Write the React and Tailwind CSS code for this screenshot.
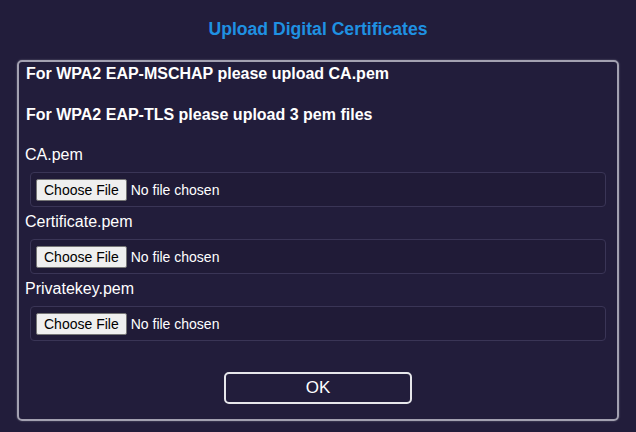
const FileRow = ({ label }) => (
  <div className="mb-[4px]">
    <div className="h-[22px] pl-[1px] text-[16px] leading-[22px] text-white">{label}</div>
    <div className="mx-[6px] mt-[6px] flex h-[35px] items-center rounded-[4px] border border-[#3a3556] bg-[#201b37] pl-[5px]">
      <span className="rounded-[2px] border border-[#767676] bg-[#efefef] px-[7px] text-[14px] leading-[20px] text-black">Choose File</span>
      <span className="ml-[4px] text-[14px] leading-[20px] text-white">No file chosen</span>
    </div>
  </div>
);

export default function App() {
  return (
    <div className="h-[432px] w-[636px] bg-[#221d3b] font-['Liberation_Sans',Arial,sans-serif]">
      <div className="h-[60px] pt-[18px] text-center text-[17.6px] font-bold leading-[22px] text-[#1f91e2]">Upload Digital Certificates</div>
      <div className="mx-[17px] flex h-[361px] flex-col rounded-[5px] border-2 border-[#a3a1b1] px-[5px] shadow-[0_0_2px_rgba(255,255,255,0.35)]">
        <div className="h-[24px] pl-[2px] text-[16px] font-bold leading-[24px] text-white">For WPA2 EAP-MSCHAP please upload CA.pem</div>
        <div className="mt-[17px] h-[24px] pl-[2px] text-[16px] font-bold leading-[24px] text-white">For WPA2 EAP-TLS please upload 3 pem files</div>
        <div className="mt-[17px]">
          <FileRow label="CA.pem" />
          <FileRow label="Certificate.pem" />
          <FileRow label="Privatekey.pem" />
        </div>
        <div className="mt-[27px] flex justify-center">
          <button type="button" className="h-[32px] w-[188px] rounded-[5px] border-2 border-[#e6e6ea] text-[17px] leading-[28px] text-white">OK</button>
        </div>
      </div>
    </div>
  );
}
